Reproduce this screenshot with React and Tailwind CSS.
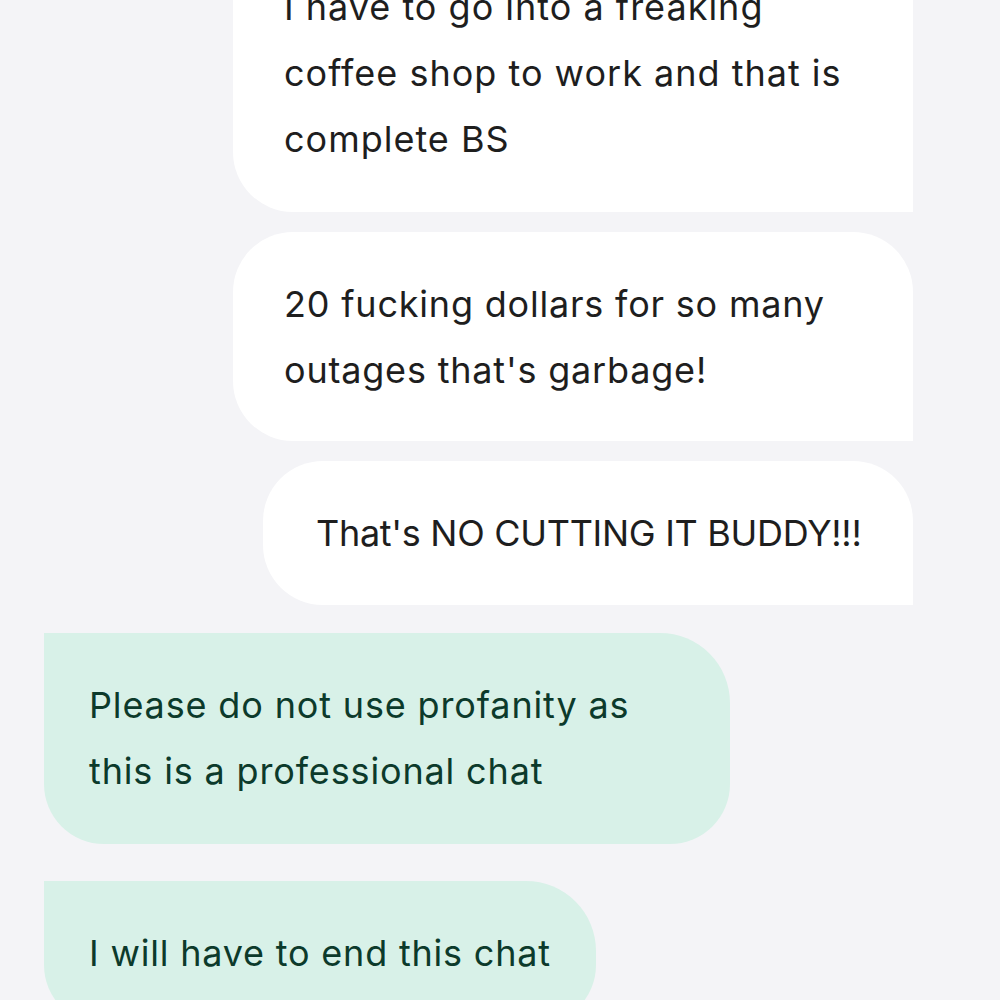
export default function App() {
  const font = { fontFamily: '"Inter", "Liberation Sans", sans-serif' };
  return (
    <div className="w-[1000px] h-[1000px] overflow-hidden bg-[#f4f4f7]" style={font}>
      <div className="flex flex-col">
        <div className="self-end mr-[87px] mt-[-66px] w-[680px] bg-white rounded-bl-[60px] pl-[51px] pr-[20px] py-[40px] text-[36px] leading-[66px] text-[#1e1e1e] tracking-[1px] whitespace-nowrap">
          I have to go into a freaking
          <br />
          coffee shop to work and that is
          <br />
          complete BS
        </div>
        <div className="self-end mr-[87px] mt-[20px] w-[680px] h-[209px] bg-white rounded-tl-[60px] rounded-tr-[60px] rounded-bl-[60px] pl-[51px] pr-[20px] pt-[39px] text-[36px] leading-[66px] text-[#1e1e1e] tracking-[0.8px] whitespace-nowrap">
          20 fucking dollars for so many
          <br />
          outages that's garbage!
        </div>
        <div className="self-end mr-[87px] mt-[20px] w-[650px] h-[144px] flex items-center bg-white rounded-tl-[60px] rounded-tr-[60px] rounded-bl-[60px] pl-[53px] pr-[20px] text-[36px] leading-[66px] text-[#1e1e1e] tracking-[-0.3px] whitespace-nowrap">
          That's NO CUTTING IT BUDDY!!!
        </div>
        <div className="self-start ml-[44px] mt-[28px] w-[686px] h-[211px] bg-[#d8f1e8] rounded-tr-[70px] rounded-br-[60px] rounded-bl-[60px] pl-[45px] pr-[20px] pt-[39px] text-[36px] leading-[66px] text-[#0c3a2b] tracking-[0.85px] whitespace-nowrap">
          Please do not use profanity as
          <br />
          this is a professional chat
        </div>
        <div className="self-start ml-[44px] mt-[37px] w-[552px] h-[144px] flex items-center bg-[#d8f1e8] rounded-tr-[70px] rounded-br-[60px] rounded-bl-[60px] pl-[45px] pr-[20px] text-[36px] leading-[66px] text-[#0c3a2b] tracking-[0.8px] whitespace-nowrap">
          I will have to end this chat
        </div>
      </div>
    </div>
  );
}
